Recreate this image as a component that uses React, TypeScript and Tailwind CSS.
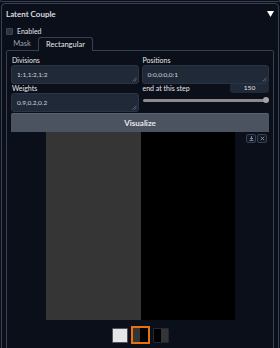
import React from 'react';

function Grip() {
  return (
    <svg className="absolute right-[1px] bottom-[1px]" width="5" height="5" viewBox="0 0 5 5">
      <path d="M4.5 0.5 L0.5 4.5 M4.5 2.5 L2.5 4.5" stroke="#6b7280" strokeWidth="0.8" />
    </svg>
  );
}

function TextBox({ label, value }: { label: string; value: string }) {
  return (
    <div className="flex flex-col">
      <div className="h-[9px] pl-[1px] text-[7px] leading-[9px] text-[#e5e7eb]">{label}</div>
      <div className="relative h-[19px] rounded-[3px] bg-[#1f2937] border border-[#2a3443] pl-[5px] flex items-center text-[6.5px] text-[#d1d5db]">
        {value}
        <Grip />
      </div>
    </div>
  );
}

export default function App() {
  return (
    <div className="w-[280px] h-[348px] overflow-hidden bg-[#0b0f19] font-['Lato',sans-serif]">
      {/* previous block edge */}
      <div className="h-[2px] border-b border-x border-[#374151] rounded-b-[3px]" />

      <div className="mt-[1px] mx-[1px] w-[278px] h-[400px] border border-[#374151] rounded-[4px]">
        {/* Header */}
        <div className="h-[19px] pl-[4px] pr-[4px] flex items-center justify-between">
          <span className="text-[8px] font-semibold text-[#e5e7eb]">Latent Couple</span>
          <svg width="7" height="6" viewBox="0 0 7 6">
            <path d="M0 0 H7 L3.5 6 Z" fill="#ffffff" />
          </svg>
        </div>

        {/* Enabled */}
        <div className="mt-[5px] h-[7px] pl-[4px] flex items-center gap-[4px]">
          <div className="w-[7px] h-[7px] rounded-[1px] bg-[#2b3443] border border-[#3b4555]" />
          <span className="text-[7px] text-[#e5e7eb]">Enabled</span>
        </div>

        {/* Tabs */}
        <div className="mt-[2px] px-[4px]">
          <div className="flex items-end h-[13px]">
            <div className="w-[32px] h-[13px] flex items-center justify-center text-[7.5px] text-[#9ca3af]">Mask</div>
            <div className="relative z-10 -mb-px h-[14px] px-[7px] flex items-center border-t border-x border-[#374151] rounded-t-[3px] bg-[#0b0f19] text-[7.5px] text-[#e5e7eb]">
              Rectangular
            </div>
          </div>

          {/* Tab panel */}
          <div className="h-[320px] border border-[#374151] rounded-[2px] px-[4px] pt-[5px]">
            <div className="grid grid-cols-2 gap-x-[3px]">
              <TextBox label="Divisions" value="1:1,1:2,1:2" />
              <TextBox label="Positions" value="0:0,0:0,0:1" />
              <TextBox label="Weights" value="0.9,0.2,0.2" />
              <div className="flex flex-col">
                <div className="h-[12px] flex items-start justify-between">
                  <span className="pl-[1px] text-[7px] leading-[7px] text-[#e5e7eb] mt-[1px]">end at this step</span>
                  <div className="w-[39px] h-[11px] rounded-[3px] bg-[#1f2937] flex items-center justify-center text-[6.5px] text-[#e5e7eb] -mt-[2px]">
                    150
                  </div>
                </div>
                <div className="relative h-[8px] mx-[1px] flex items-center">
                  <div className="w-full h-[3px] rounded-full bg-[#8b8b8b]" />
                  <div className="absolute right-[-1px] w-[6px] h-[6px] rounded-full bg-[#a3a3a3]" />
                </div>
              </div>
            </div>

            {/* Visualize */}
            <div className="mt-[1px] h-[19px] rounded-t-[2px] bg-[#4b5260] border-t border-[#5a6270] flex items-center justify-center text-[8px] font-bold text-[#e5e7eb]">
              Visualize
            </div>

            {/* Image */}
            <div className="relative">
              <div className="flex justify-center">
                <div className="w-[189px] h-[188px] flex">
                  <div className="w-[95px] bg-[#353535]" />
                  <div className="flex-1 bg-black" />
                </div>
              </div>
              <div className="absolute top-[2px] right-[2px] flex gap-[1px]">
                <div className="w-[10px] h-[9px] rounded-[2px] border border-[#374151] bg-[#111827] flex items-center justify-center">
                  <svg width="5" height="5" viewBox="0 0 5 5">
                    <path d="M2.5 0 V3 M1 2 L2.5 3.5 L4 2 M0.5 4.6 H4.5" stroke="#9ca3af" strokeWidth="0.8" fill="none" />
                  </svg>
                </div>
                <div className="w-[10px] h-[9px] rounded-[2px] border border-[#374151] bg-[#111827] flex items-center justify-center">
                  <svg width="5" height="5" viewBox="0 0 5 5">
                    <path d="M0.8 0.8 L4.2 4.2 M4.2 0.8 L0.8 4.2" stroke="#9ca3af" strokeWidth="0.8" />
                  </svg>
                </div>
              </div>
              {/* Thumbnails */}
              <div className="mt-[6px] flex justify-center items-center gap-[3px]">
                <div className="w-[16px] h-[15px] rounded-[1px] border border-[#4b5563] bg-[#e6e6e6]" />
                <div className="w-[19px] h-[18px] border-2 border-[#e8700f] flex">
                  <div className="w-1/2 bg-[#353535]" />
                  <div className="w-1/2 bg-black" />
                </div>
                <div className="w-[16px] h-[15px] rounded-[1px] border border-[#1f2937] flex overflow-hidden">
                  <div className="w-1/2 bg-black" />
                  <div className="w-1/2 bg-[#353535]" />
                </div>
              </div>
            </div>
          </div>
        </div>
      </div>
    </div>
  );
}
